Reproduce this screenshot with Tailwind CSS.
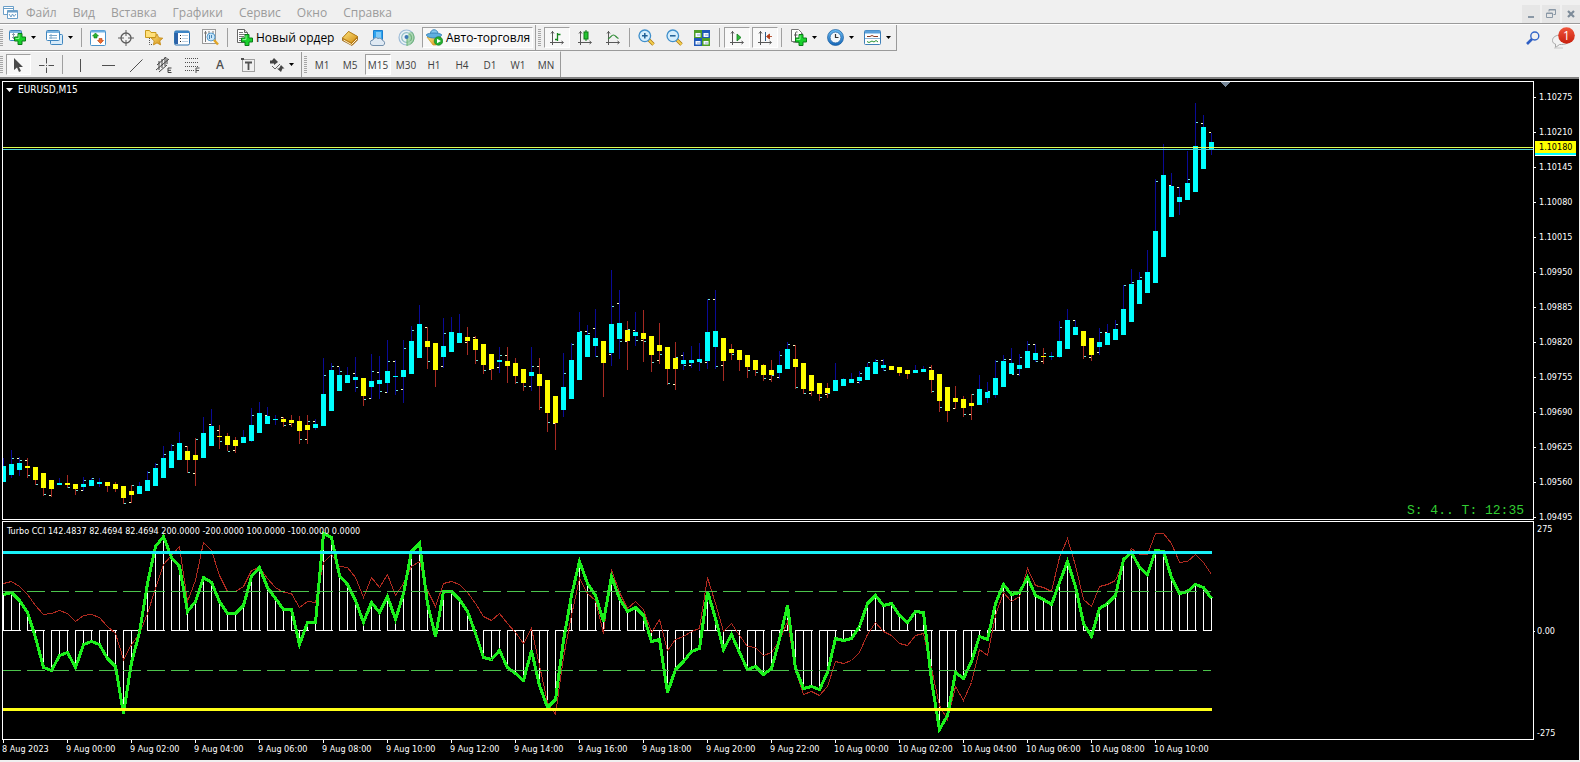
<!DOCTYPE html>
<html lang="ru">
<head>
<meta charset="utf-8">
<title>EURUSD,M15</title>
<script src="https://cdn.jsdelivr.net/npm/@tailwindcss/browser@4"></script>
</head>
<body class="flex min-h-screen flex-col bg-[#f0f0f0] font-['Open_Sans','Noto_Sans',sans-serif] text-[12px] leading-4 text-black">

<svg class="absolute size-0" aria-hidden="true">
  <defs>
    <linearGradient id="blue" x1="0" y1="0" x2="0" y2="1"><stop offset="0" stop-color="#6fc0f5"/><stop offset="1" stop-color="#1566b8"/></linearGradient>
    <linearGradient id="gold" x1="0" y1="0" x2="1" y2="1"><stop offset="0" stop-color="#ffe680"/><stop offset="1" stop-color="#d08a10"/></linearGradient>
    <linearGradient id="red" x1="0" y1="0" x2="0" y2="1"><stop offset="0" stop-color="#f0563c"/><stop offset="1" stop-color="#c81e0c"/></linearGradient>
    <symbol id="plus" viewBox="0 0 12 12"><path d="M4 .5h4v3.500h3.500v4h-3.500v3.500h-4v-3.500h-3.500v-4h3.500z" fill="#19d02c" stroke="#0b7d18"/><path d="M5 1.500v4h-3.500" fill="none" stroke="#8df58f"/></symbol>
    <symbol id="axes" viewBox="0 0 16 16"><path d="M3.500 1v14M1 12.500h13M2 3.500l1.500-2 1.500 2M12.500 11l2 1.500-2 1.500" fill="none" stroke="#585858"/></symbol>
    <symbol id="caret" viewBox="0 0 5 3"><path d="M0 0h5l-2.500 3z" fill="#000"/></symbol>
  </defs>
</svg>

<header class="flex flex-col">
  <nav class="flex h-6 items-center border-b border-[#9a9a9a] pl-[3px]" aria-label="Меню">
    <svg class="mt-0.5 mr-2 size-[15px]" viewBox="0 0 15 15" fill="#fff" stroke="#6b9fc8"><path d="M.5 1.500h10v8h-10zM.5 3.500h10"/><path d="M4.500 5.500h10v8h-10z"/><path d="M4.500 6.500h10" stroke-width="2"/><path d="M6 9l2 3 1.500-3 1.500 2.500 2-2.500" fill="none"/></svg>
    <div class="mt-0.5 flex gap-4 text-[#9b9b9b]">
      <button>Файл</button><button>Вид</button><button>Вставка</button><button>Графики</button><button>Сервис</button><button>Окно</button><button>Справка</button>
    </div>
    <div class="mt-1 ml-auto flex h-[18px] gap-0.5">
      <button aria-label="Свернуть" class="grid w-[18px] place-items-center bg-[#e6e6e6]"><svg class="size-3" viewBox="0 0 12 12"><path d="M3 9h6" stroke="#8a98a6" stroke-width="2"/></svg></button>
      <button aria-label="Восстановить" class="grid w-[18px] place-items-center bg-[#e6e6e6]"><svg class="size-3" viewBox="0 0 12 12" fill="none" stroke="#8a98a6"><path d="M4 3.500v-2h6.500v5h-2M1.500 5h6v4.500h-6zM4 2h6.500M1.500 5.500h6"/></svg></button>
      <button aria-label="Закрыть" class="grid w-[18px] place-items-center bg-[#e6e6e6]"><svg class="size-3" viewBox="0 0 12 12"><path d="M3 3l6 6M9 3l-6 6" stroke="#7d8b99" stroke-width="2.200"/></svg></button>
    </div>
  </nav>

  <div class="flex h-[27px] items-stretch border-t border-white">
    <div class="flex items-stretch border-r border-b border-[#9a9a9a]" role="toolbar" aria-label="Стандартная">
      <span class="my-1 w-1 border-r border-[#f0f0f0] bg-[repeating-linear-gradient(#a6a6a6_0_1px,#f0f0f0_1px_2px)]"></span>
      <button aria-label="Новый график" class="flex w-[37px] items-center gap-[5px] pl-[5px]">
        <svg class="size-[17px]" viewBox="0 0 17 17"><rect x=".5" y="1.500" width="12" height="10" rx="1" fill="#fff" stroke="#3f86bf"/><path d="M1 3h11" stroke="#7fb6e0" stroke-width="2"/><path d="M3 5.500h3M3 8.500h4M4.500 4v6" stroke="#8a9aa8"/><use href="#plus" x="5" y="4" width="12" height="12"/></svg>
        <svg class="h-[3px] w-[5px]"><use href="#caret"/></svg></button>
      <button aria-label="Профили" class="flex w-[37px] items-center gap-[5px] pl-[5px]">
        <svg class="size-[17px]" viewBox="0 0 17 17"><rect x="4.500" y="5.500" width="12" height="10" rx="1" fill="#d8ebf9" stroke="#3f86bf"/><rect x=".5" y="1.500" width="13" height="10" rx="1" fill="#fff" stroke="#3f86bf"/><path d="M1 3h12" stroke="#7fb6e0" stroke-width="2"/><path d="M3 6.500h8M3 9h8M5 5v5" stroke="#7ca7c8"/></svg>
        <svg class="h-[3px] w-[5px]"><use href="#caret"/></svg></button>
      <span class="my-[3px] mr-0.5 ml-[3px] border-l border-[#a0a0a0]"></span>
      <button aria-label="Обзор рынка" class="grid w-7 place-items-center"><svg class="size-4" viewBox="0 0 16 16"><rect x=".5" y=".5" width="15" height="15" rx="1" fill="#fff" stroke="#4a94cc"/><path d="M1 1.500h14" stroke="#6db1e4" stroke-width="2"/><path d="M5.500 3l3 3h-1.500v2h-3v-2h-1.500z" fill="#27b52f" stroke="#0d7a15" stroke-width=".6"/><path d="M10.500 13.500l3-3h-1.500v-2h-3v2h-1.500z" fill="#f26a2c" stroke="#b13c0c" stroke-width=".6"/></svg></button>
      <button aria-label="Окно данных" class="grid w-7 place-items-center"><svg class="size-4" viewBox="0 0 16 16" fill="none" stroke="#5c5c5c"><circle cx="8" cy="8" r="5" stroke-width="1.300"/><path d="M8 0v6M8 10v6M0 8h6M10 8h6"/></svg></button>
      <button aria-label="Навигатор" class="grid w-7 place-items-center"><svg class="h-[17px] w-[18px]" viewBox="0 0 18 17"><path d="M.5 1.500h4l1.500 2h5v5h-10.500z" fill="#ffe07a" stroke="#c99a1c"/><path d="M4.500 9v6.500h3" fill="none" stroke="#555" stroke-dasharray="1 1"/><path d="M12 5l1.800 3.700 4 .5-3 2.700.8 4-3.600-2-3.600 2 .8-4-3-2.700 4-.5z" fill="url(#gold)" stroke="#c48912" stroke-width=".8"/></svg></button>
      <button aria-label="Терминал" class="grid w-7 place-items-center"><svg class="size-4" viewBox="0 0 16 16"><rect x=".5" y="1" width="15" height="14" rx="1.500" fill="#fff" stroke="#2b70ad"/><path d="M1 2h14" stroke="#3c85c6" stroke-width="2"/><path d="M2.500 3v11" stroke="#2d62a8" stroke-width="3"/><path d="M6 5.500h1M6 8.500h1M6 11.500h1" stroke="#222"/><path d="M8 5.500h6M8 8.500h6M8 11.500h6" stroke="#b9cfe2"/></svg></button>
      <button aria-label="Тестер стратегий" class="grid w-7 place-items-center"><svg class="size-[17px]" viewBox="0 0 17 17"><rect x=".5" y=".5" width="13" height="14" fill="#fafafa" stroke="#9a9a9a"/><path d="M3.500 2v11M2 4h3M7 2v4M11 2v4" stroke="#777"/><circle cx="9" cy="8" r="4" fill="#bfe3fa" fill-opacity=".85" stroke="#5a9ed0"/><path d="M7.500 6v4M9.500 6v3" stroke="#4785b5"/><path d="M12 11l4 4.500" stroke="#e0a526" stroke-width="2.400"/></svg></button>
      <span class="my-[3px] mr-0.5 ml-[3px] border-l border-[#a0a0a0]"></span>
      <button class="flex w-[106px] items-center gap-[3px] pl-[6px] whitespace-nowrap">
        <svg class="size-[17px] shrink-0" viewBox="0 0 17 17"><path d="M1.500 .5h7l3 3v10h-10z" fill="#fff" stroke="#666"/><path d="M8.500 .5v3h3" fill="#ddd" stroke="#666"/><path d="M3 3.500h4M3 5.500h6M3 7.500h5M3 9.500h3M3 11.500h3" stroke="#777"/><use href="#plus" x="5" y="5" width="12" height="12"/></svg>
        Новый ордер</button>
      <button aria-label="MetaEditor" class="grid w-7 place-items-center"><svg class="size-4" viewBox="0 0 16 16"><path d="M.5 8l6-6.500 9 5v3.500l-5.500 5.500-9.500-5z" fill="#b97612" stroke="#8a5708" stroke-width=".7"/><path d="M.5 8l6-6.500 9 5-6 6.500z" fill="url(#gold)" stroke="#b57c12" stroke-width=".7"/><path d="M1.500 10l8 4.500 5.500-5.500" fill="none" stroke="#fff3c8"/></svg></button>
      <button aria-label="VPS" class="grid w-7 place-items-center"><svg class="size-4" viewBox="0 0 16 16"><path d="M3.500 .5h9v9h-9z" fill="#2fa4ee" stroke="#1b7fd0"/><path d="M6 3h5M6 5h5M6 7h5" stroke="#d6efff"/><path d="M3 15.500a2.700 2.700 0 0 1 0-5.500 3 3 0 0 1 5-1.500 3.200 3.200 0 0 1 4.500 2 2.600 2.600 0 0 1 .5 5z" fill="#dfe9f3" stroke="#7390ad"/></svg></button>
      <button aria-label="Сигналы" class="grid w-7 place-items-center"><svg class="size-[17px]" viewBox="0 0 17 17" fill="none"><circle cx="8.500" cy="8.500" r="7.500" stroke="#9dbcd8" stroke-width="1.200" fill="#e9f2f6"/><circle cx="8.500" cy="8.500" r="4.800" stroke="#8fbcc4" stroke-width="1.200"/><path d="M9 9v8a8 8 0 0 0 7-7.500 8 8 0 0 0-4-7l-3 5z" fill="#8fcb94" fill-opacity=".7"/><path d="M9 9v8M11.500 5a4.800 4.800 0 0 1 1 7M13.500 3a7.500 7.500 0 0 1-1 12" stroke="#6cb274"/><circle cx="8.500" cy="8" r="2" fill="#3c78b5"/></svg></button>
      <button class="mx-0.5 mt-0.5 mb-0.5 flex w-[111px] items-center gap-[3px] border border-[#a0a0a0] border-r-white border-b-white bg-[#f8f8f8] pl-[3px] whitespace-nowrap" aria-pressed="true">
        <svg class="size-[17px] shrink-0" viewBox="0 0 17 17"><path d="M1 8h14l-5 8h-3z" fill="url(#gold)" stroke="#cf9a1c" stroke-width=".7"/><path d="M4.500 4.500c0-5 7-5 7.500 0" fill="#86c8f0" stroke="#3a87bb"/><path d="M.5 5.500c3-2 12-2 15 0 .5 2-3 3.500-7.500 3.500s-8-1.500-7.500-3.500z" fill="#5fafe0" stroke="#2e79ae" stroke-width=".8"/><circle cx="12.500" cy="12" r="4.300" fill="#24ad2f" stroke="#137a1c" stroke-width=".6"/><path d="M11 9.700v4.600l4-2.300z" fill="#fff"/></svg>
        Авто-торговля</button>
      <span class="w-[3px] border-l border-[#a0a0a0]"></span>
      <span class="my-1 mr-0.5 w-[3px] bg-[repeating-linear-gradient(#a6a6a6_0_1px,#f0f0f0_1px_2px)]"></span>
      <button aria-label="Бары" aria-pressed="true" class="mx-px mt-0.5 mb-0.5 grid w-[26px] place-items-center border border-[#a0a0a0] border-r-white border-b-white bg-[#f8f8f8]"><svg class="size-4" viewBox="0 0 16 16"><use href="#axes"/><path d="M8.500 3v8M8.500 4.500h3M6 9.500h2.500" stroke="#17861f" stroke-width="1.300"/></svg></button>
      <button aria-label="Свечи" class="grid w-7 place-items-center"><svg class="size-4" viewBox="0 0 16 16"><use href="#axes"/><path d="M9 0v11" stroke="#0d7a15"/><rect x="7" y="2" width="4" height="7" fill="#25c432" stroke="#0d7a15"/></svg></button>
      <button aria-label="Линия" class="grid w-7 place-items-center"><svg class="size-4" viewBox="0 0 16 16"><use href="#axes"/><path d="M3 9c3-1 3-4 5.500-4 2 0 2.500 2.500 5 3.500" fill="none" stroke="#2f8c36" stroke-width="1.200"/></svg></button>
      <span class="mx-0.5 my-[3px] border-l border-[#a0a0a0]"></span>
      <button aria-label="Увеличить" class="grid w-7 place-items-center"><svg class="size-[17px]" viewBox="0 0 17 17"><path d="M10.500 10.500l5 5" stroke="#a97812" stroke-width="3.400"/><path d="M11 11l4.500 4.500" stroke="#f5d04e" stroke-width="1.800"/><circle cx="6.800" cy="6.800" r="5.800" fill="#d5edfc" stroke="#3f8fcb" stroke-width="1.300"/><path d="M4 6.800h5.600M6.800 4v5.600" stroke="#1f5f95" stroke-width="1.500"/></svg></button>
      <button aria-label="Уменьшить" class="grid w-7 place-items-center"><svg class="size-[17px]" viewBox="0 0 17 17"><path d="M10.500 10.500l5 5" stroke="#a97812" stroke-width="3.400"/><path d="M11 11l4.500 4.500" stroke="#f5d04e" stroke-width="1.800"/><circle cx="6.800" cy="6.800" r="5.800" fill="#d5edfc" stroke="#3f8fcb" stroke-width="1.300"/><path d="M4 6.800h5.600" stroke="#1f5f95" stroke-width="1.500"/></svg></button>
      <button aria-label="Упорядочить окна" class="grid w-7 place-items-center"><svg class="size-4" viewBox="0 0 16 16"><path d="M0 0h8v8h-8z" fill="#4e9f28"/><path d="M8 0h8v8h-8z" fill="#1f58b8"/><path d="M0 8h8v8h-8z" fill="#1f58b8"/><path d="M8 8h8v8h-8z" fill="#4e9f28"/><path d="M1.500 3h5v4h-5zM9.500 3h5v4h-5zM1.500 11h5v3.500h-5zM9.500 11h5v3.500h-5z" fill="#f3f8ff"/><path d="M3 5h3M11 5h3M3 13h3M11 13h3" stroke="#8ea9c6"/></svg></button>
      <span class="mx-[3px] my-[3px] border-l border-[#a0a0a0]"></span>
      <button aria-label="Автопрокрутка" aria-pressed="true" class="mx-px mt-0.5 mb-0.5 grid w-[26px] place-items-center border border-[#a0a0a0] border-r-white border-b-white bg-[#f8f8f8]"><svg class="size-4" viewBox="0 0 16 16"><use href="#axes"/><path d="M8 4v7l4-3.500z" fill="#2dbb39" stroke="#137a1c" stroke-width=".8"/></svg></button>
      <button aria-label="Сдвиг графика" aria-pressed="true" class="mx-px mt-0.5 mb-0.5 grid w-[26px] place-items-center border border-[#a0a0a0] border-r-white border-b-white bg-[#f8f8f8]"><svg class="size-4" viewBox="0 0 16 16"><use href="#axes"/><path d="M8.500 2v9" stroke="#2d5d88"/><path d="M15 6.500h-4M12.500 4l-3 2.500 3 2.500z" fill="#c8441c" stroke="#a8330f" stroke-width=".8"/></svg></button>
      <span class="my-[3px] mr-[3px] ml-0.5 border-l border-[#a0a0a0]"></span>
      <button aria-label="Индикаторы" class="flex w-[37px] items-center gap-[5px] pl-[5px]">
        <svg class="size-[17px]" viewBox="0 0 17 17"><path d="M3.500 2.500h7l2 2v9h-9z" fill="#fff" stroke="#888"/><path d="M1.500 .5h7l3 3v9h-10z" fill="#fff" stroke="#777"/><path d="M7.500 3c-2-.5-2 .5-2 2v5M4 6h3.500" fill="none" stroke="#555"/><use href="#plus" x="5" y="5" width="12" height="12"/></svg>
        <svg class="h-[3px] w-[5px]"><use href="#caret"/></svg></button>
      <button aria-label="Периоды" class="flex w-[37px] items-center gap-[5px] pl-[5px]">
        <svg class="size-[17px]" viewBox="0 0 17 17"><circle cx="8.500" cy="8.500" r="8" fill="url(#blue)" stroke="#155a9e" stroke-width=".7"/><circle cx="8.500" cy="8.500" r="5.400" fill="#f3f7fa" stroke="#1c5fa2" stroke-width=".7"/><path d="M8.500 5v3.500h3" fill="none" stroke="#333" stroke-width="1.200"/></svg>
        <svg class="h-[3px] w-[5px]"><use href="#caret"/></svg></button>
      <button aria-label="Шаблоны" class="flex w-[37px] items-center gap-[5px] pl-[5px]">
        <svg class="size-[17px]" viewBox="0 0 17 17"><rect x=".5" y="1.500" width="16" height="14" rx="1" fill="#fff" stroke="#3f7fb8"/><path d="M1 3h15" stroke="#5aa0da" stroke-width="3"/><path d="M1 9.500h15" stroke="#8fb4d2"/><path d="M3 7.500h3l2-1 2 1h4" fill="none" stroke="#8c3a20"/><path d="M3 12.500l2 1 3-1.500 2 1 2-1.500 2 1.500" fill="none" stroke="#2a9434"/></svg>
        <svg class="h-[3px] w-[5px]"><use href="#caret"/></svg></button>
    </div>
    <div class="ml-auto flex items-start gap-[11px] pr-[5px]">
      <button aria-label="Поиск" class="mt-1.5"><svg class="size-[14px]" viewBox="0 0 14 14" fill="none"><circle cx="8.800" cy="5" r="4" stroke="#3264c8" stroke-width="1.400"/><path d="M6 8l-5 5" stroke="#2f5fc4" stroke-width="2.600"/></svg></button>
      <button aria-label="Уведомления: 1" class="relative mt-0.5 h-[22px] w-6"><svg class="size-full" viewBox="0 0 24 22"><path d="M10 8c-5 0-8.500 2-8.500 5.500 0 2 1 3 3 3.500v3.500l4-3h2c5 0 8-2 8-5z" fill="#f2f2f2" stroke="#a8a8a8"/><path d="M3 21h9" stroke="#c8c8c8"/><circle cx="15.500" cy="8.500" r="8.300" fill="url(#red)"/></svg><span class="absolute top-0 left-[7px] w-[17px] text-center text-[12px] leading-[17px] text-white">1</span></button>
    </div>
  </div>

  <div class="flex h-[26px] items-stretch text-[10px] text-[#404040]">
    <div class="flex items-stretch border-t border-r border-t-white border-r-[#9a9a9a]" role="toolbar" aria-label="Графика">
      <span class="my-1 w-1 border-r border-[#f0f0f0] bg-[repeating-linear-gradient(#a6a6a6_0_1px,#f0f0f0_1px_2px)]"></span>
      <button aria-label="Курсор" aria-pressed="true" class="mx-px mt-0.5 mb-0.5 ml-0.5 grid w-[25px] place-items-center border border-[#a0a0a0] border-r-white border-b-white bg-[#f8f8f8]"><svg class="size-4" viewBox="0 0 16 16"><path d="M3 1v12l3-2.500 2 4.500 2-1-2-4h4z" fill="#4a4a4a"/></svg></button>
      <button aria-label="Перекрестие" class="grid w-7 place-items-center"><svg class="size-4" viewBox="0 0 16 16"><path d="M8.500 1v5.500M8.500 10.500v5.500M1 8.500h5.500M10.500 8.500h5.500M8 8.500h1" stroke="#505050"/></svg></button>
      <span class="my-[3px] mr-[3px] ml-0.5 border-l border-[#a0a0a0]"></span>
      <button aria-label="Вертикальная линия" class="grid w-7 place-items-center"><svg class="size-4" viewBox="0 0 16 16"><path d="M8.500 2v13" stroke="#505050"/></svg></button>
      <button aria-label="Горизонтальная линия" class="grid w-7 place-items-center"><svg class="size-4" viewBox="0 0 16 16"><path d="M2 8.500h13" stroke="#505050"/></svg></button>
      <button aria-label="Трендовая линия" class="grid w-7 place-items-center"><svg class="size-4" viewBox="0 0 16 16"><path d="M2 15l12.500-12.500" stroke="#505050"/></svg></button>
      <button aria-label="Канал" class="grid w-7 place-items-center"><svg class="size-4" viewBox="0 0 16 16" fill="none" stroke="#404040"><path d="M0 13l13-11M1 8l11-9.500M3 15l8-7M3 4v9M6 2v9M9 0v9M11 1v6" /><path d="M15.500 11h-3.500v4.500h3.500M12 13.300h3"/></svg></button>
      <button aria-label="Фибоначчи" class="grid w-7 place-items-center"><svg class="size-4" viewBox="0 0 16 16" fill="none" stroke="#505050"><path d="M1 1.500h14M1 5.500h14M1 9.500h14M1 13.500h9" stroke-dasharray="1 1"/><path d="M15.500 11h-3.500v5M12 13.500h3"/></svg></button>
      <button aria-label="Текст" class="grid w-7 place-items-center text-[12px] font-semibold text-[#505050]">A</button>
      <button aria-label="Метка" class="grid w-7 place-items-center"><svg class="size-4" viewBox="0 0 16 16" fill="none" stroke="#505050"><rect x="2.500" y="2.500" width="12" height="12" stroke-dasharray="1 1"/><path d="M5 5.500h7M8.500 5v8" stroke-width="1.800"/><path d="M1 1h3v2h-3z" fill="#505050" stroke="none"/></svg></button>
      <button aria-label="Стрелки" class="flex w-[37px] items-center gap-1 pl-[7px]"><svg class="size-4" viewBox="0 0 16 16"><path d="M5 1l4 4-4 3v-1.500h-4v-3h2zM12 8l3.500 3.500h-2l-1.500 3.500-4-3.500h2z" fill="#454545"/><path d="M3 9l3 3 5-5" fill="none" stroke="#666"/></svg><svg class="h-[3px] w-[5px]"><use href="#caret"/></svg></button>
      <span class="w-0.5"></span>
      <span class="w-[3px] border-l border-[#9a9a9a]"></span>
      <span class="my-1 mr-px w-[3px] bg-[repeating-linear-gradient(#a6a6a6_0_1px,#f0f0f0_1px_2px)]"></span>
      <button class="w-7">M1</button><button class="w-7">M5</button>
      <button aria-pressed="true" class="mx-px mt-0.5 mb-0.5 w-[26px] border border-[#a0a0a0] border-r-white border-b-white bg-[#f8f8f8]">M15</button>
      <button class="w-7">M30</button><button class="w-7">H1</button><button class="w-7">H4</button><button class="w-7">D1</button><button class="w-7">W1</button><button class="w-7">MN</button>
    </div>
  </div>
</header>

<main class="mr-px mb-0.5 flex grow border-t-2 border-[#808080] bg-black font-['DejaVu_Sans_Condensed','Noto_Sans',sans-serif] text-[9px] leading-3 text-white">
  <div class="flex min-w-0 grow flex-col pt-0.5 pl-0.5">
    <section class="relative overflow-hidden border border-white" aria-label="EURUSD,M15">
      <svg id="price" class="block h-[437px] w-full" shape-rendering="crispEdges"></svg>
      <div class="absolute top-0.5 left-[3px] flex items-center gap-1"><svg class="h-1 w-[7px]" viewBox="0 0 7 4"><path d="M0 0h7l-3.500 4z" fill="#fff"/></svg><h1 class="pl-px text-[10px]">EURUSD,M15</h1></div>
      <p class="absolute right-[9px] bottom-0 font-['Liberation_Mono',monospace] text-[13px] leading-4 text-[#32cd32]">S: 4.. T: 12:35</p>
    </section>
    <section class="relative mt-px overflow-hidden border border-white" aria-label="Turbo CCI">
      <svg id="cci" class="block h-[217px] w-full" shape-rendering="crispEdges"></svg>
      <h2 class="absolute top-[3px] left-1">Turbo CCI 142.4837 82.4694 82.4694 200.0000 -200.0000 100.0000 -100.0000 0.0000</h2>
    </section>
    <ol id="times" class="flex overflow-hidden"></ol>
  </div>
  <aside class="relative flex w-[45px] shrink-0 flex-col whitespace-nowrap">
    <ol id="prices" class="flex h-[444px] flex-col justify-between pt-3"></ol>
    <ol class="flex h-[216px] flex-col justify-between">
      <li class="pl-[3px]">275</li>
      <li class="flex items-center gap-0.5"><span class="h-px w-px bg-white"></span>0.00</li>
      <li class="pl-[3px]">-275</li>
    </ol>
    <div class="absolute top-[62px] left-px w-[41px] border-b border-white bg-[#ffff00] text-black">
      <p class="box-content h-3 border-b-2 border-[#00ffff] pl-1 leading-3">1.10180</p>
    </div>
  </aside>
</main>

<script>
const STEP = 8, X0 = 0;
// Candle blocks: base is the block's top in pixels, values are thirds of a pixel below it.
// Row: colour kind, then high, top, bottom, low.
const candles = [
[318, `b 175 198 245 245|b 150 192 225 235|b 172 189 210 228|s 175 198 204 233|s 201 201 240 255|s 219 219 264 288|s 240 240 267 290|b 234 249 255 255|s 225 249 255 265|s 252 252 267 284|b 231 252 261 272|b 234 240 258 258|b 234 246 252 260|s 246 246 258 276|s 246 252 267 276|s 258 258 294 312|s 255 273 285 308|b 247 258 282 282|b 212 240 273 273|b 189 204 258 258|b 138 174 234 234|b 132 153 204 204|b 96 129 180 180|s 138 153 180 218|s 114 165 180 257|b 51 99 174 174|b 27 78 138 138|s 75 108 111 146|s 99 108 135 153|s 111 120 138 158|b 90 111 129 129|b 24 75 123 126|b 6 39 99 99|b 21 48 72 72|b 46 57 60 75|s 51 57 66 81|s 45 60 69 81|s 48 63 93 131|s 45 75 90 131|b 57 72 84 90`],
[168, `b 324 432 528 528|b 339 360 483 483|b 350 375 423 423|b 350 375 399 399|b 321 381 390 426|s 384 384 438 467|b 312 393 411 446|b 318 390 402 446|b 269 363 399 430|b 330 378 381 434|b 270 360 381 458|b 228 273 372 372|b 165 222 324 324|s 231 273 291 357|s 279 279 360 410|b 204 288 321 354|b 201 246 306 306|b 192 249 279 279|s 231 261 273 315|s 258 267 300 342|s 282 282 345 372|s 312 312 357 390|b 291 330 336 369|s 291 333 348 399|s 324 339 378 402|s 357 357 399 423|b 291 366 378 423|s 324 372 408 480|s 390 390 489 546|s 438 438 519 600|b 309 411 480 500|b 279 330 447 447|b 186 246 390 390|b 225 255 321 321|b 177 264 288 320|s 273 273 339 441|b 60 222 309 348|b 120 219 267 327|s 213 240 273 360|b 186 246 258 288|s 180 249 267 335|s 258 258 315 366|s 219 285 303 342|s 291 291 357 405|s 276 324 357 420|b 306 330 342 360|b 288 330 339 354|b 279 327 336 362|b 147 246 333 357|b 120 243 291 357|s 264 264 333 393|s 282 297 309 330|s 300 300 330 363|s 315 315 351 384|s 330 330 360 378|s 342 345 375 393|s 330 360 375 396|b 303 345 369 387|b 276 297 357 357|s 285 327 351 417|s 339 339 417 432|s 375 375 423 438|s 399 399 432 453|s 399 414 429 444|b 339 390 423 423|b 384 387 408 408|b 369 387 399 399|b 363 381 393 402|b 339 351 390 390|b 327 336 372 372|b 327 345 354 362|s 348 348 360 360|s 351 351 369 378|s 360 360 372 387|b 345 360 369 369|b 348 357 366 366`],
[148, `s 405 420 450 489|s 432 432 513 546|s 471 471 543 576|s 468 504 516 536|s 498 507 534 561|s 492 519 528 570|b 435 477 525 525|b 456 486 504 518|b 390 444 495 503|b 375 393 471 471|b 354 399 432 432|b 372 405 417 437|b 333 363 414 414|b 342 369 390 397|s 354 378 381 402|b 366 378 381 390|b 273 333 381 384|b 237 270 357 357|b 270 291 315 315|s 303 303 348 386|s 324 324 375 392|b 294 336 351 375|b 282 309 345 345|b 270 297 330 330|b 165 237 315 315|b 117 162 276 276|b 126 150 222 222|b 60 126 189 189`],
[8, `b 267 423 579 579|b 162 255 501 501|b 249 288 381 381|b 291 321 336 375|b 183 279 330 330|b 39 168 306 306|b 75 111 237 237|b 129 156 180 195`]];
// Open (l) and close (r) marks: bar, side, level; same blocks as the candles.
const marks = [
[318, '1r175 2l175 2r181 3l181 3r226 4r253 5r283 6l286 8r262 9r270 10l270 10r240 11l240 11r236 15r310 16l307 16r256 18r216 19r193 20r163 21r136 23l139 23r216 24l219 24r118 26l73 27l92 27r124 28r153 29l152 31r46 33l46 35l53 35r76 36l72 37r118 38l118 38r64 39l64'],
[168, '40r376 41r349 42l349 42r364 44l370 44r412 45r448 46l445 46r364 47l367 47r424 48l427 48r334 49l334 49r421 50l418 50r295 51r241 53l232 53r334 55l349 55r250 58l277 59l262 59r331 60r361 61l358 62l352 62r316 63l316 64r397 65r409 66l409 66r349 67l349 67r472 68r517 69l520 70r370 71r283 72r244 73l244 73r250 74l235 74r319 76l313 76r169 77l160 77r274 78l274 78r238 79l241 79r271 80l271 80r274 81r337 82l331 82r313 83r400 84l403 84r322 85l316 85r346 86l346 87r337 88l337 88r148 89l148 89r349 90l346 91r313 93r361 94r367 95r385 96l387 96r376 97l382 97r316 98r283 99l286 99r412 100r430 101l430 102r442 103l433 103r429 107l397 107r370 108r337 109r331 110l331 110r361'],
[148, '116l412 116r484 117r532 119l535 120r553 121l553 121r493 123r484 124r394 125r388 126l388 126r433 127l433 127r382 128r343 129l343 129r394 130l394 130r370 132r292 134l271 135r379 136l382 137l367 137r307 138l307 139r283 140r166 141r157 142r142'],
[8, '144r274 146l286 147l292 148r268 149r97 150l100 151l127']];
const main = [237,231,256,291,366,456,465,420,412,456,386,379,386,429,453,595,440,350,205,94,63,125,153,288,258,185,200,258,295,295,270,184,157,216,250,283,281,387,322,322,54,67,180,207,256,322,261,290,242,312,235,108,85,265,363,227,227,253,288,353,425,433,405,455,473,496,405,510,575,552,375,240,139,205,240,318,182,250,288,277,300,378,373,532,462,437,407,399,228,310,402,358,410,461,454,478,460,373,270,458,520,512,523,470,370,376,368,333,264,240,270,265,300,320,287,291,495,643,600,471,490,437,362,373,265,207,237,232,187,240,253,268,200,139,212,325,363,279,265,241,132,110,157,176,105,107,187,234,228,206,217,248];
const turbo = [203,199,213,238,269,298,295,286,293,318,301,298,307,333,353,432,386,355,295,220,147,120,92,258,195,80,104,180,229,229,212,166,155,190,215,231,235,276,257,260,140,117,154,157,186,246,185,217,177,241,205,152,138,225,273,203,199,208,230,265,303,315,293,325,350,385,340,450,560,597,425,300,190,233,255,354,163,230,280,257,283,350,311,405,373,362,347,340,187,265,348,324,360,393,397,421,412,375,318,465,537,527,541,512,438,444,435,412,358,322,348,361,384,391,359,353,460,570,612,512,555,500,403,420,300,232,258,243,160,210,215,227,127,70,150,253,272,213,207,195,135,98,118,118,53,53,85,142,137,117,140,178];

const rect = (x, y, w, h, c) => `<rect x="${x}" y="${y}" width="${w}" height="${h}" fill="${c}"/>`;
let wicks = '', bodies = '', ticks = '', i = 0;
for (const [base, rows] of candles) for (const row of rows.split('|')) {
  const [kind, ...v] = row.split(' ');
  const [hi, top, bot, lo] = v.map(n => base + Math.round(n / 3));
  const x = X0 + STEP * i++;
  wicks += rect(x, hi, 1, lo - hi, kind === 'b' ? '#0a0a96' : '#a52a22');
  bodies += rect(x - 2, top, 5, bot - top, kind === 'b' ? '#00ffff' : '#ffff00');
}
for (const [base, list] of marks) for (const m of list.split(' ')) {
  const [, n, side, v] = m.match(/(\d+)([lr])(\d+)/);
  ticks += rect(X0 + STEP * n + (side === 'l' ? -2 : 1), base + Math.floor(v / 3), 2, 1, side === 'l' ? '#ffffc0' : '#70e8e0');
}
document.getElementById('price').innerHTML = wicks + ticks + bodies +
  '<rect x="0" y="65" width="100%" height="1" fill="#e0ff50"/><rect x="0" y="67" width="100%" height="1" fill="#50d0d8"/>' +
  '<path d="M1218 0h9l-4 5h-1z" fill="#778899"/>';

const level = v => -7 + Math.round(v / 3), zero = 108;
const line = a => a.map((v, k) => `${X0 + STEP * k + .5},${level(v) + .5}`).join(' ');
document.getElementById('cci').innerHTML =
  main.map((v, k) => rect(X0 + STEP * k, Math.min(zero, level(v)), 1, Math.abs(level(v) - zero), '#fff')).join('') +
  `<path d="M0 ${zero + .5}H1209" stroke="#fff" stroke-dasharray="18 6"/>` +
  `<polyline points="${line(turbo)}" fill="none" stroke="#b02a20"/>` +
  `<polyline points="${line(main)}" fill="none" stroke="#1cf01c" stroke-width="3"/>` +
  '<path d="M0 69.500H1208M0 148.500H1208" stroke="#4cc44c" stroke-dasharray="18 6"/>' +
  rect(0, 29, 1209, 3, '#18f0f8') + rect(0, 186, 1209, 3, '#ffff18');

document.getElementById('prices').innerHTML = Array.from({ length: 13 }, (_, k) =>
  `<li class="flex items-center gap-[3px]"><span class="h-px w-0.5 bg-white"></span>${((110275 - 65 * k) / 100000).toFixed(5)}</li>`).join('');
const hours = ['8 Aug 2023'];
for (let h = 0; h < 36; h += 2) hours.push(`${h < 24 ? 9 : 10} Aug ${String(h % 24).padStart(2, '0')}:00`);
document.getElementById('times').innerHTML = hours.map(t =>
  `<li class="w-16 shrink-0 whitespace-nowrap"><span class="ml-px block h-[3px] w-px bg-white"></span>${t}</li>`).join('');
</script>
</body>
</html>
